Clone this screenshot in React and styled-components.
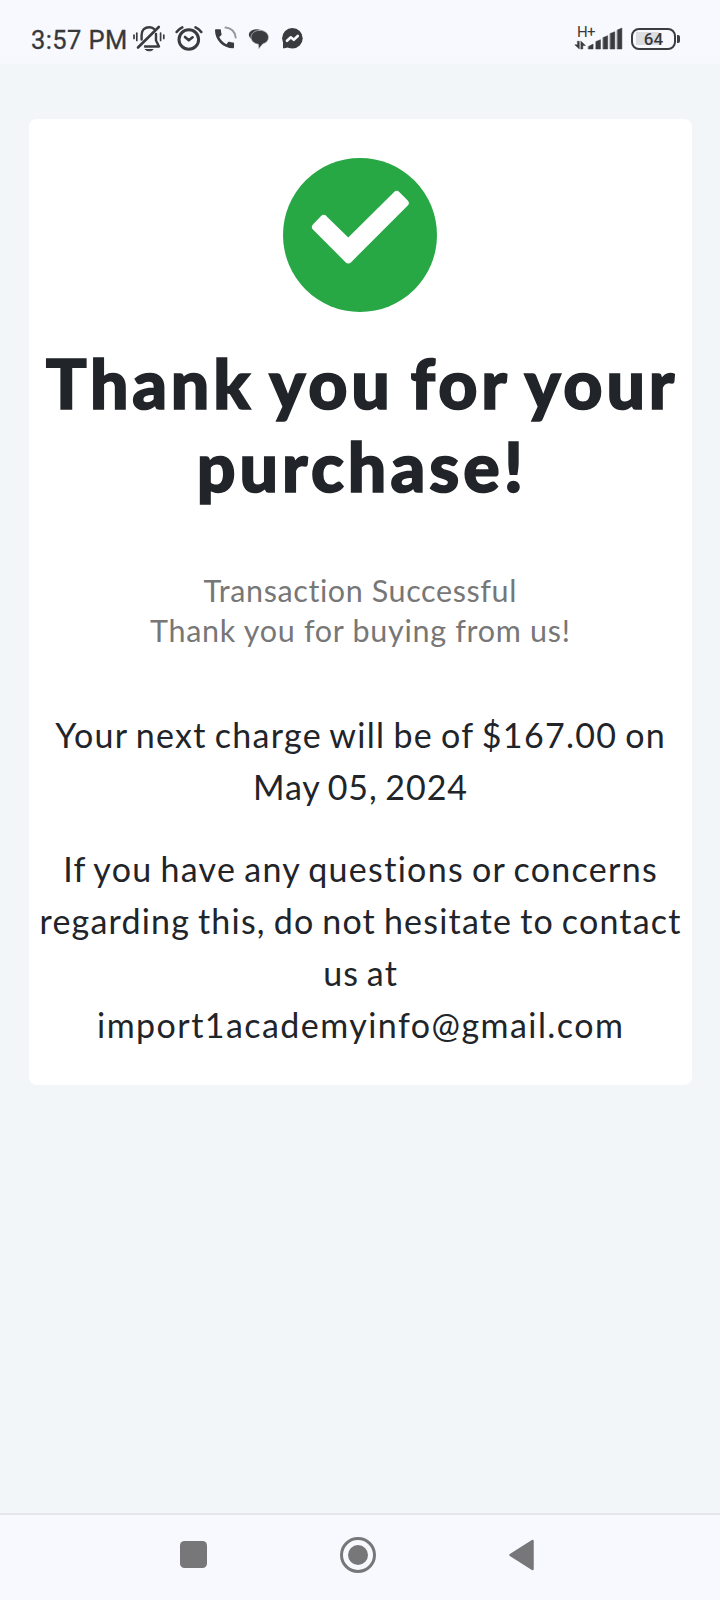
import React from "react";
import styled, { createGlobalStyle } from "styled-components";

const GlobalStyle = createGlobalStyle`
    * {
        box-sizing: border-box;
    }

    body {
        margin: 0;
        background-color: #f2f6f9;
        font-family: Lato, "Open Sans", sans-serif;
    }
`;

const Screen = styled.div`
    width: 720px;
    height: 1600px;
    display: flex;
    flex-direction: column;
    overflow: hidden;
`;

const StatusBar = styled.header`
    height: 64px;
    flex: none;
    display: flex;
    align-items: flex-start;
    justify-content: space-between;
    padding: 22px 40px 0 31px;
    color: #37383c;
    background: linear-gradient(#f8f9fe 48px, #f5f8fc);
    font-family: Roboto, sans-serif;
`;

const StatusGroup = styled.div`
    height: 34px;
    display: flex;
    align-items: center;
`;

const Clock = styled.span`
    width: 101px;
    padding-top: 2px;
    font-size: 25.5px;
    line-height: 34px;
    letter-spacing: 0.4px;
    white-space: nowrap;
    -webkit-text-stroke: 0.3px #37383c;
`;

const StatusIcon = styled.svg`
    display: block;
    flex: none;
    height: 30px;
    margin-right: ${(props) => props.$gap || 0}px;
    fill: none;
    stroke: #3a3b3f;
    stroke-width: 2;
    stroke-linecap: round;
    stroke-linejoin: round;
`;

const Network = styled.div`
    display: grid;
    align-items: center;
    width: 54px;
    height: 34px;

    > * {
        grid-area: 1 / 1;
    }
`;

const NetworkType = styled.span`
    align-self: start;
    padding-left: 3px;
    font-size: 15px;
    font-weight: 400;
    line-height: 20px;
    letter-spacing: -0.6px;
`;

const Battery = styled.div`
    width: 45px;
    height: 22px;
    margin: 0 1px 0 3px;
    border: 2.5px solid #3c3d41;
    border-radius: 8px;
    font-size: 17px;
    font-weight: 500;
    line-height: 19px;
    text-align: center;
    background: linear-gradient(#dcdde0, #dcdde0) 3px 2px / 23px 13px no-repeat;
`;

const BatteryTip = styled.i`
    width: 3px;
    height: 8px;
    border-radius: 0 2px 2px 0;
    background-color: #3c3d41;
`;

const Content = styled.main`
    flex: 1;
    padding: 55px 28px 0 29px;
`;

const Card = styled.section`
    height: 966px;
    padding: 39px 1px 0 0;
    border-radius: 8px;
    background-color: #ffffff;
    text-align: center;
    white-space: nowrap;
`;

const CheckIcon = styled.svg`
    display: block;
    margin: 0 auto;
`;

const Title = styled.h1`
    margin: 29px 0 0;
    color: #212429;
    font-size: 68px;
    font-weight: 900;
    line-height: 83.4px;
    word-spacing: -3px;
    -webkit-text-stroke: 1.6px #212429;
`;

const Subtitle = styled.p`
    margin: 62px 0 0;
    color: #777777;
    font-size: 30.5px;
    line-height: 40px;
`;

const Message = styled.p`
    margin: ${(props) => props.$gap}px 0 0;
    color: #212429;
    font-size: 34px;
    line-height: 51.8px;
    word-spacing: -2px;
`;

// the left padding balances the spacing after the last letter
const Line = styled.span`
    display: block;
    padding-left: ${(props) => props.$spacing}px;
    letter-spacing: ${(props) => props.$spacing}px;
`;

const NavBar = styled.nav`
    height: 87px;
    flex: none;
    display: flex;
    align-items: center;
    gap: 133px;
    padding: 0 0 6px 180px;
    border-top: 2px solid #e3e5ea;
    background-color: #f8f9fe;
`;

const NavIcon = styled.svg`
    display: block;
    flex: none;
    fill: #77777a;
`;

function BellOffIcon() {
    return (
        <StatusIcon width="34" viewBox="0 0 34 30" $gap={8}>
            <path d="M2 11v3.5M4.8 9v7.5M28.6 9v7.5M31.8 11v3.5" strokeWidth="1.7" />
            <path d="M9.6 15.5V11c0-5 3.4-7.8 7.6-7.8 2 0 3.6.6 4.8 1.6" strokeWidth="2.4" />
            <path d="M24 10v6.5l3 6H13" strokeWidth="2.4" />
            <path d="M6 23.5L26.8 3" strokeWidth="2.6" />
            <path d="M13.5 25.5H21c-1 1.8-6.5 1.8-7.5 0z" fill="#3a3b3f" strokeWidth="1" />
        </StatusIcon>
    );
}

function AlarmIcon() {
    return (
        <StatusIcon width="32" viewBox="0 0 32 30" $gap={6}>
            <circle cx="14.8" cy="15.5" r="9.8" strokeWidth="3" />
            <path d="M2.6 8Q5 4.8 8.3 3.4M21.5 3.4Q25 4.8 27.3 8" strokeWidth="2.6" />
            <path d="M11 13l3.8 3.3 3.8-3" strokeWidth="2.6" />
        </StatusIcon>
    );
}

function CallIcon() {
    return (
        <StatusIcon width="28" viewBox="0 0 28 30" $gap={6}>
            <path
                transform="translate(-0.2 2.1) scale(1.06)"
                fill="#3a3b3f"
                stroke="none"
                d="M20.01 15.38c-1.23 0-2.42-.2-3.53-.56-.35-.12-.74-.03-1.01.24l-1.57 1.97c-2.83-1.35-5.48-3.9-6.89-6.83l1.95-1.66c.27-.28.35-.67.24-1.02-.37-1.11-.56-2.3-.56-3.53 0-.54-.45-.99-.99-.99H4.19C3.65 3 3 3.24 3 3.99 3 13.28 10.73 21 20.01 21c.71 0 .99-.63.99-1.18v-3.45c0-.54-.45-.99-.99-.99z"
            />
            <path d="M13.5 3.5A10.5 10.5 0 0 1 23.7 13.5" stroke="#96979c" />
        </StatusIcon>
    );
}

function ChatIcon() {
    return (
        <StatusIcon width="26" viewBox="0 0 26 30" $gap={7}>
            <ellipse cx="11" cy="10.8" rx="8.2" ry="5.6" fill="#3a3b3f" stroke="none" />
            <path
                d="M13.8 6.3c5 0 8.7 3 8.7 7 0 3.6-2.6 5.9-5.7 6.6l-4 4.8-.5-4.5C8 19.6 5 17 5 13.3c0-4 3.8-7 8.8-7z"
                fill="#3a3b3f"
                stroke="#c9cad0"
                strokeWidth="0.7"
            />
        </StatusIcon>
    );
}

function MessengerIcon() {
    return (
        <StatusIcon width="27" viewBox="0 0 27 30">
            <circle cx="13.4" cy="14.2" r="10.3" fill="#3a3b3f" stroke="none" />
            <path d="M4.500 18v6l6-1.500z" fill="#3a3b3f" strokeWidth="1" />
            <path d="M8 16.800l3.800-3.500 3 2.500 4-3.800" stroke="#f8f9fe" strokeWidth="2.600" />
        </StatusIcon>
    );
}

function SignalIcon() {
    return (
        <StatusIcon width="54" viewBox="0 0 54 30">
            <g fill="#3a3b3f" stroke="#3a3b3f" strokeWidth="0.500">
                <path d="M3.500 17.300h1.800V25L.8 20.800h2.700zM7 17.300l4.500 4.200H8.800V25H7z" />
                <path d="M14.500 22.500l4.600-2.500v5h-4.600z" />
                <path d="M22 17.500l4.500-1.800V25H22z" />
                <path d="M29.200 13.500l4.500-1.800V25h-4.500z" />
                <path d="M36.300 9.500l4.500-1.800V25h-4.500z" />
                <path d="M43.400 6l4.500-2v21h-4.500z" />
            </g>
        </StatusIcon>
    );
}

export default function App() {
    return (
        <Screen>
            <GlobalStyle />
            <StatusBar>
                <StatusGroup>
                    <Clock>3:57 PM</Clock>
                    <BellOffIcon />
                    <AlarmIcon />
                    <CallIcon />
                    <ChatIcon />
                    <MessengerIcon />
                </StatusGroup>
                <StatusGroup>
                    <Network>
                        <NetworkType>H+</NetworkType>
                        <SignalIcon />
                    </Network>
                    <Battery>64</Battery>
                    <BatteryTip />
                </StatusGroup>
            </StatusBar>
            <Content>
                <Card>
                    <CheckIcon width="154" height="154" viewBox="0 0 154 154">
                        <circle cx="77" cy="77" r="77" fill="#28a745" />
                        <path
                            d="M33 69l7.700-8 24.600 24 48.400-48 8 8-56.400 56.300z"
                            fill="#ffffff"
                            stroke="#ffffff"
                            strokeWidth="8"
                            strokeLinejoin="round"
                        />
                    </CheckIcon>
                    <Title>
                        <Line $spacing={3.8}>Thank you for your</Line>
                        <Line $spacing={4}>purchase!</Line>
                    </Title>
                    <Subtitle>
                        <Line $spacing={0.6}>Transaction Successful</Line>
                        <Line $spacing={0.7}>Thank you for buying from us!</Line>
                    </Subtitle>
                    <Message $gap={59}>
                        <Line $spacing={1.3}>
                            Your next charge will be of $167.00 on
                        </Line>
                        <Line $spacing={0.95}>May 05, 2024</Line>
                    </Message>
                    <Message $gap={31}>
                        <Line $spacing={1.3}>
                            If you have any questions or concerns
                        </Line>
                        <Line $spacing={1.2}>
                            regarding this, do not hesitate to contact
                        </Line>
                        <Line $spacing={1.1}>us at</Line>
                        <Line $spacing={1.45}>import1academyinfo@gmail.com</Line>
                    </Message>
                </Card>
            </Content>
            <NavBar>
                <NavIcon width="27" height="27" viewBox="0 0 27 27">
                    <rect width="27" height="27" rx="4.500" />
                </NavIcon>
                <NavIcon width="36" height="36" viewBox="0 0 36 36">
                    <circle
                        cx="18"
                        cy="18"
                        r="16.500"
                        fill="none"
                        stroke="#77777a"
                        strokeWidth="3"
                    />
                    <circle cx="18" cy="18" r="10" />
                </NavIcon>
                <NavIcon width="25" height="32" viewBox="0 0 25 32">
                    <path
                        d="M1.500 16L23.500 2v28z"
                        stroke="#77777a"
                        strokeWidth="2.500"
                        strokeLinejoin="round"
                    />
                </NavIcon>
            </NavBar>
        </Screen>
    );
}
